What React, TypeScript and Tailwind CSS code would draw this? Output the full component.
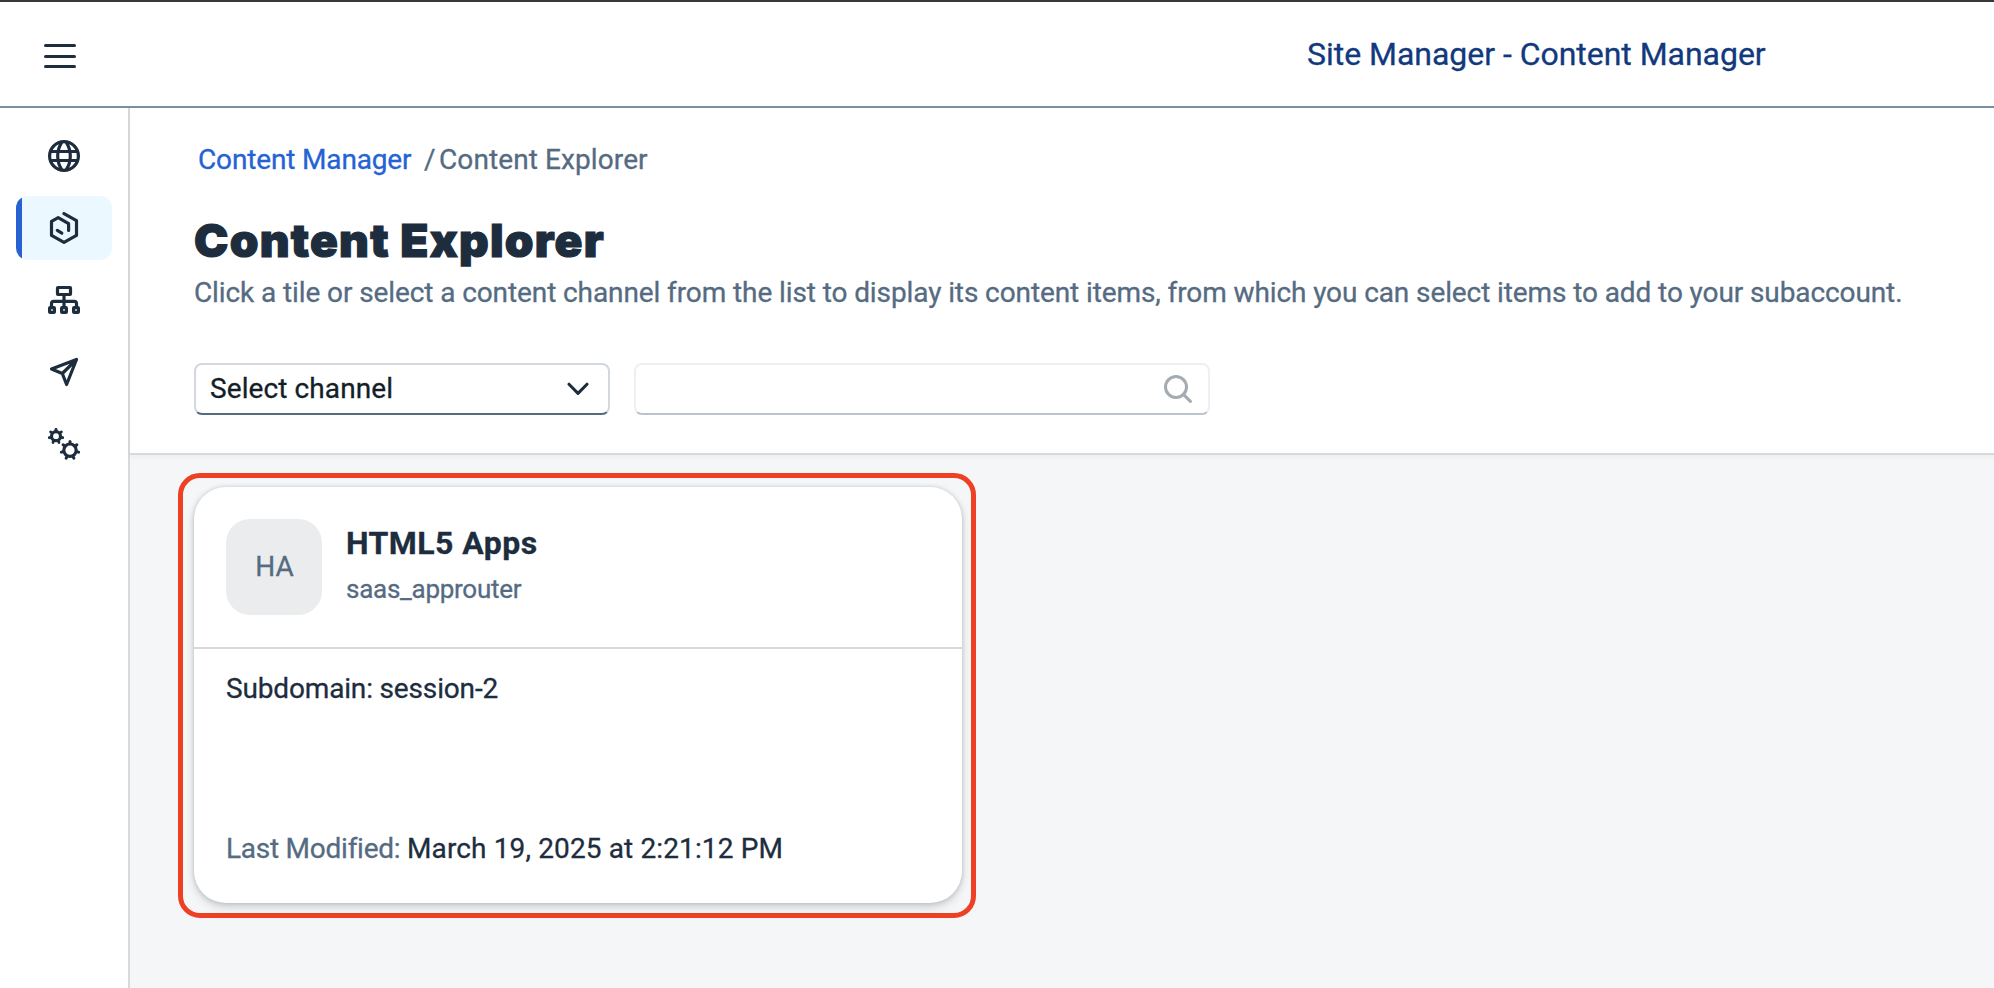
import type { ReactNode } from "react";

function Icon({ children }: { children: ReactNode }) {
  return (
    <svg
      width="32"
      height="32"
      viewBox="0 0 32 32"
      fill="none"
      stroke="currentColor"
      strokeWidth="3.2"
      strokeLinecap="round"
      strokeLinejoin="round"
    >
      {children}
    </svg>
  );
}

function Gear({ cx, cy, ring, tooth, width }: { cx: number; cy: number; ring: number; tooth: number; width: number }) {
  return (
    <g>
      <circle cx={cx} cy={cy} r={ring} />
      {[0, 1, 2, 3, 4, 5, 6].map((i) => {
        const a = (i * 2 * Math.PI) / 7 - Math.PI / 2;
        return (
          <line
            key={i}
            x1={cx + Math.cos(a) * (ring + 1)}
            y1={cy + Math.sin(a) * (ring + 1)}
            x2={cx + Math.cos(a) * tooth}
            y2={cy + Math.sin(a) * tooth}
            strokeWidth={width}
          />
        );
      })}
    </g>
  );
}

const items: { label: string; icon: ReactNode }[] = [
  {
    label: "Site Directory",
    icon: (
      <Icon>
        <circle cx="16" cy="16" r="14.4" />
        <path d="M3 11.5H29M3 20.5H29" />
        <path d="M13.6 2.6C8.4 10.5 8.4 21.5 13.6 29.4M18.4 2.6C23.6 10.5 23.6 21.5 18.4 29.4" />
      </Icon>
    ),
  },
  {
    label: "Content Manager",
    icon: (
      <Icon>
        <path d="M16 1.6L28.5 8.6V23.4L16 30.4L3.5 23.4V9.4L10.2 5.6L20.6 11.7V18.4" />
        <path d="M9.3 18.4L13.8 21.1" />
      </Icon>
    ),
  },
  {
    label: "Channel Manager",
    icon: (
      <Icon>
        <rect x="9.5" y="3.5" width="13" height="7" rx="0.5" />
        <path d="M16 11V23M3.5 23V19.6Q3.5 17.3 5.8 17.3H26.2Q28.5 17.3 28.5 19.6V23" />
        <rect x="1.6" y="23.6" width="4.8" height="4.8" rx="0.5" />
        <rect x="13.6" y="23.6" width="4.8" height="4.8" rx="0.5" />
        <rect x="25.6" y="23.6" width="4.8" height="4.8" rx="0.5" />
      </Icon>
    ),
  },
  {
    label: "Transport Manager",
    icon: (
      <Icon>
        <path d="M28.5 3.5L3.5 13L14.3 17.5L18.6 28.5L28.5 3.5L14.3 17.5" />
      </Icon>
    ),
  },
  {
    label: "Settings",
    icon: (
      <Icon>
        <Gear cx={8} cy={8.2} ring={4.5} tooth={6.9} width={2.8} />
        <Gear cx={22} cy={22.2} ring={6.2} tooth={8.8} width={3} />
      </Icon>
    ),
  },
];

export default function App() {
  return (
    <div className="flex h-[988px] w-[1994px] flex-col overflow-hidden bg-white font-['Roboto',sans-serif] text-[28px] leading-10 text-[#1d2d3e] [-webkit-text-stroke:0.3px]">
      <header className="flex h-[108px] shrink-0 items-center border-t-2 border-b-2 border-t-[#383838] border-b-[#788fa6] pl-11">
        <button aria-label="Menu" className="mt-1 flex h-6 w-8 flex-col justify-between">
          <span className="h-[3px] w-full rounded-full bg-[#1d2d3e]" />
          <span className="h-[3px] w-full rounded-full bg-[#1d2d3e]" />
          <span className="h-[3px] w-full rounded-full bg-[#1d2d3e]" />
        </button>
        <div className="ml-[1231px] text-[32px] tracking-[-0.03px] whitespace-nowrap text-[#12397d]">
          Site Manager - Content Manager
        </div>
      </header>

      <div className="flex min-h-0 flex-1">
        <nav className="flex w-[130px] shrink-0 flex-col gap-2 border-r-2 border-[#d9d9d9] px-4 pt-4">
          {items.map(({ label, icon }, i) => (
            <button
              key={label}
              aria-label={label}
              className={
                i === 1
                  ? "flex h-16 items-center overflow-hidden rounded-xl bg-[#ebf8ff]"
                  : "flex h-16 items-center"
              }
            >
              <span className={i === 1 ? "h-full w-1.5 bg-[#2761d2]" : "w-1.5"} />
              <span className="ml-[26px]">{icon}</span>
            </button>
          ))}
        </nav>

        <main className="flex min-w-0 flex-1 flex-col">
          <section className="z-10 h-[347px] shrink-0 border-b-2 border-[#d9d9d9] bg-white pt-8 pl-16 whitespace-nowrap shadow-[0_2px_4px_rgba(34,54,73,0.05)]">
            <div className="flex pl-1 text-[#556b82]">
              <a className="w-[226px] tracking-[-0.15px] text-[#2562d4]">Content Manager</a>
              <span className="w-[15px]">/</span>
              <span className="tracking-[0.1px]">Content Explorer</span>
            </div>
            <h1 className="mt-8 font-['Inter',sans-serif] text-[46px] leading-[56px] font-black tracking-[1.25px] [-webkit-text-stroke:1.2px]">
              Content Explorer
            </h1>
            <p className="mt-[5px] tracking-[-0.1px] text-[#556b82]">
              Click a tile or select a content channel from the list to display its content items, from which you can
              select items to add to your subaccount.
            </p>
            <div className="mt-[50px] flex gap-6">
              <div className="flex h-[52px] w-[416px] items-center justify-between rounded-lg border-2 border-[#d2d8de] border-b-[#556b82] pr-[19px] pl-3.5 text-[#131e29]">
                <span className="tracking-[0.1px]">Select channel</span>
                <svg width="22" height="14" viewBox="0 0 22 14" fill="none" stroke="#1d2d3e" strokeWidth="3" strokeLinecap="round" strokeLinejoin="round">
                  <path d="M2 2.2L11 11.4L20 2.2" />
                </svg>
              </div>
              <div className="flex h-[52px] w-[576px] items-center justify-end rounded-lg border-2 border-[#edeff1] border-b-[#bbc4cd] pr-4">
                <svg width="28" height="28" viewBox="0 0 28 28" fill="none" stroke="#a5abb2" strokeWidth="3" strokeLinecap="round">
                  <circle cx="12" cy="12" r="10.5" />
                  <path d="M19.6 19.6L26.4 26.4" />
                </svg>
              </div>
            </div>
          </section>

          <section className="flex-1 bg-[#f5f6f7] pt-[18px] pl-12">
            <div className="w-[798px] rounded-[22px] border-[5px] border-[#ee4025] pt-[9px] pr-[9px] pb-2.5 pl-[11px]">
              <article className="flex h-[416px] w-[768px] flex-col rounded-[32px] bg-white shadow-[0_0_4px_rgba(34,53,72,0.18),0_4px_8px_rgba(34,53,72,0.2)]">
                <div className="flex h-[162px] shrink-0 gap-6 border-b-2 border-[#d9d9d9] px-8 pt-8">
                  <div className="flex size-24 shrink-0 items-center justify-center rounded-3xl bg-[#eaecee] pl-px text-[#556b82]">
                    HA
                  </div>
                  <div className="pt-1">
                    <h2 className="text-[32px] font-bold tracking-[0.45px]">HTML5 Apps</h2>
                    <p className="mt-2 text-[26px] leading-9 tracking-[-0.27px] text-[#556b82]">saas_approuter</p>
                  </div>
                </div>
                <div className="flex flex-1 flex-col justify-between px-8 pt-5 pb-[34px]">
                  <p className="tracking-[-0.16px]">Subdomain: session-2</p>
                  <p className="flex">
                    <span className="w-[181px] tracking-[-0.25px] text-[#556b82]">Last Modified:</span>
                    <span className="tracking-[0.13px]">March 19, 2025 at 2:21:12 PM</span>
                  </p>
                </div>
              </article>
            </div>
          </section>
        </main>
      </div>
    </div>
  );
}
